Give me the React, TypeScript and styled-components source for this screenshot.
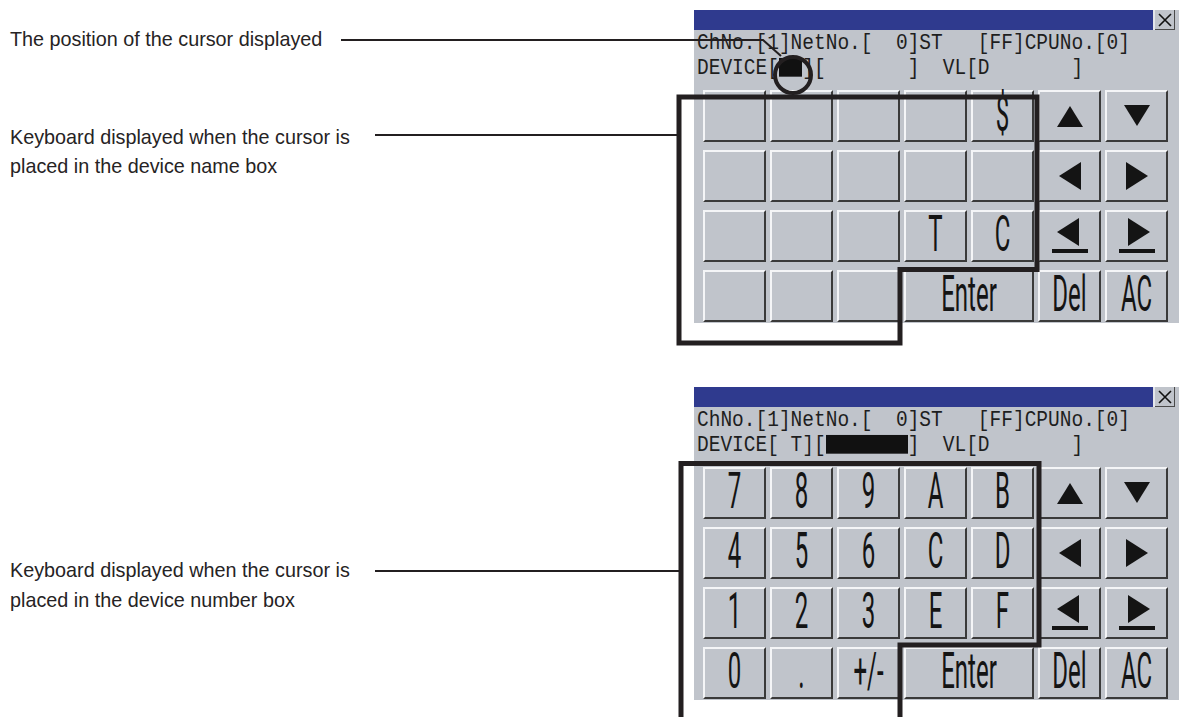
import React from "react";
import styled, { createGlobalStyle } from "styled-components";

const GlobalStyle = createGlobalStyle`
  html, body { margin: 0; padding: 0; background: #ffffff; }
  body { font-family: "Liberation Sans", Arial, sans-serif; }
`;

const Page = styled.div`
  position: relative;
  width: 1179px;
  height: 717px;
  overflow: hidden;
  background: #ffffff;
  box-sizing: border-box;
  padding-top: 10px;
  display: flex;
  flex-direction: column;
  gap: 64px;
`;

const Section = styled.section`
  display: grid;
  grid-template-columns: 694px 485px;
  align-items: start;
`;

const Labels = styled.div<{ $pad: number }>`
  padding-top: ${(p) => p.$pad}px;
  padding-left: 10px;
  display: flex;
  flex-direction: column;
`;

const Label = styled.p<{ $gap?: number }>`
  margin: ${(p) => p.$gap ?? 0}px 0 0 0;
  font-family: "Liberation Sans", Arial, sans-serif;
  font-size: 19.8px;
  line-height: 29.5px;
  color: #262324;
`;

const Panel = styled.div`
  background: #c0c4cb;
  display: flex;
  flex-direction: column;
  height: 313px;
`;

const TitleBar = styled.div`
  display: flex;
  height: 20px;
  align-items: stretch;
`;

const TitleFill = styled.div`
  flex: 1;
  background: #2f3a8e;
  border-right: 2px solid #e4e6ea;
`;

const CloseBox = styled.div`
  width: 19px;
  margin-right: 4px;
  background: #c0c4cb;
  border-right: 1px solid #4a4a4a;
  border-bottom: 1px solid #4a4a4a;
  display: flex;
  align-items: center;
  justify-content: center;
`;

const Info = styled.div`
  padding: 2px 0 8px 3px;
  font-family: "Liberation Mono", "DejaVu Sans Mono", monospace;
  font-size: 19.5px;
  color: #1e1e1e;
`;

const InfoLine = styled.div`
  height: 25px;
  line-height: 25px;
  white-space: pre;
  transform: scaleY(1.17);
  transform-origin: 50% 60%;
`;

const CursorBlock = styled.span<{ $cells: number }>`
  display: inline-block;
  width: ${(p) => p.$cells}ch;
  height: 16px;
  background: #111111;
  vertical-align: -2px;
`;

const Keypad = styled.div`
  display: grid;
  grid-template-columns: repeat(7, 63px);
  grid-auto-rows: 52px;
  column-gap: 4px;
  row-gap: 8px;
  padding-left: 9px;
`;

const Key = styled.div<{ $span?: number }>`
  grid-column: span ${(p) => p.$span ?? 1};
  box-sizing: border-box;
  background: #c0c4cb;
  border-style: solid;
  border-width: 2px;
  border-color: #f4f5f7 #3a3a3a #3a3a3a #f4f5f7;
  display: flex;
  align-items: center;
  justify-content: center;
`;

const KeyLabel = styled.span`
  display: inline-block;
  font-family: Roboto, "Liberation Sans", Arial, sans-serif;
  font-weight: 400;
  font-size: 24px;
  line-height: 20px;
  height: 20px;
  color: #141414;
  transform: scaleY(2.05);
  transform-origin: 50% 55%;
`;

const Overlay = styled.svg`
  position: absolute;
  left: 0;
  top: 0;
  pointer-events: none;
`;

type Arrow = "up" | "down" | "left" | "right" | "leftBar" | "rightBar";

const ArrowIcon: React.FC<{ kind: Arrow }> = ({ kind }) => {
  const fill = "#141414";
  if (kind === "up")
    return (
      <svg width="30" height="24" viewBox="0 0 30 24">
        <polygon points="15,2 28,23 2,23" fill={fill} />
      </svg>
    );
  if (kind === "down")
    return (
      <svg width="30" height="24" viewBox="0 0 30 24">
        <polygon points="2,1 28,1 15,22" fill={fill} />
      </svg>
    );
  if (kind === "left")
    return (
      <svg width="26" height="30" viewBox="0 0 26 30">
        <polygon points="24,1 24,29 2,15" fill={fill} />
      </svg>
    );
  if (kind === "right")
    return (
      <svg width="26" height="30" viewBox="0 0 26 30">
        <polygon points="2,1 2,29 24,15" fill={fill} />
      </svg>
    );
  if (kind === "leftBar")
    return (
      <svg width="38" height="38" viewBox="0 0 38 38">
        <polygon points="28,1 28,29 6,15" fill={fill} />
        <rect x="1" y="32" width="36" height="4" fill={fill} />
      </svg>
    );
  return (
    <svg width="38" height="38" viewBox="0 0 38 38">
      <polygon points="10,1 10,29 32,15" fill={fill} />
      <rect x="1" y="32" width="36" height="4" fill={fill} />
    </svg>
  );
};

type KeyDef = { label?: string; arrow?: Arrow; span?: number };

const arrowsRows: KeyDef[][] = [
  [{ arrow: "up" }, { arrow: "down" }],
  [{ arrow: "left" }, { arrow: "right" }],
  [{ arrow: "leftBar" }, { arrow: "rightBar" }],
];

const nameKeys: KeyDef[] = [
  {}, {}, {}, {}, { label: "$" }, ...arrowsRows[0],
  {}, {}, {}, {}, {}, ...arrowsRows[1],
  {}, {}, {}, { label: "T" }, { label: "C" }, ...arrowsRows[2],
  {}, {}, {}, { label: "Enter", span: 2 }, { label: "Del" }, { label: "AC" },
];

const numberKeys: KeyDef[] = [
  { label: "7" }, { label: "8" }, { label: "9" }, { label: "A" }, { label: "B" }, ...arrowsRows[0],
  { label: "4" }, { label: "5" }, { label: "6" }, { label: "C" }, { label: "D" }, ...arrowsRows[1],
  { label: "1" }, { label: "2" }, { label: "3" }, { label: "E" }, { label: "F" }, ...arrowsRows[2],
  { label: "0" }, { label: "." }, { label: "+/-" }, { label: "Enter", span: 2 }, { label: "Del" }, { label: "AC" },
];

const KeyboardPanel: React.FC<{ keys: KeyDef[]; deviceLine: React.ReactNode }> = ({ keys, deviceLine }) => (
  <Panel>
    <TitleBar>
      <TitleFill />
      <CloseBox>
        <svg width="14" height="14" viewBox="0 0 14 14">
          <path d="M1 1 L13 13 M13 1 L1 13" stroke="#111" strokeWidth="1.6" />
        </svg>
      </CloseBox>
    </TitleBar>
    <Info>
      <InfoLine>{"ChNo.[1]NetNo.[  0]ST   [FF]CPUNo.[0]"}</InfoLine>
      <InfoLine>{deviceLine}</InfoLine>
    </Info>
    <Keypad>
      {keys.map((k, i) => (
        <Key key={i} $span={k.span}>
          {k.arrow ? <ArrowIcon kind={k.arrow} /> : k.label ? <KeyLabel>{k.label}</KeyLabel> : null}
        </Key>
      ))}
    </Keypad>
  </Panel>
);

export default function App() {
  return (
    <>
      <GlobalStyle />
      <Page>
        <Section>
          <Labels $pad={15}>
            <Label>The position of the cursor displayed</Label>
            <Label $gap={68}>
              Keyboard displayed when the cursor is
              <br />
              placed in the device name box
            </Label>
          </Labels>
          <KeyboardPanel
            keys={nameKeys}
            deviceLine={
              <>
                {"DEVICE["}
                <CursorBlock $cells={2} />
                {"][       ]  VL[D       ]"}
              </>
            }
          />
        </Section>
        <Section>
          <Labels $pad={169}>
            <Label>
              Keyboard displayed when the cursor is
              <br />
              placed in the device number box
            </Label>
          </Labels>
          <KeyboardPanel
            keys={numberKeys}
            deviceLine={
              <>
                {"DEVICE[ T]["}
                <CursorBlock $cells={7} />
                {"]  VL[D       ]"}
              </>
            }
          />
        </Section>
        <Overlay width="1179" height="717" viewBox="0 0 1179 717">
          <g stroke="#231f20" fill="none">
            <polyline points="341,40 763,40 781,56" strokeWidth="2" />
            <circle cx="793" cy="75" r="18" strokeWidth="4" />
            <line x1="375" y1="135" x2="679" y2="135" strokeWidth="2" />
            <polygon points="679,97 1037,97 1037,269.5 900,269.5 900,343 679,343" strokeWidth="5" />
            <line x1="375" y1="571" x2="681" y2="571" strokeWidth="2" />
            <polyline points="681,722 681,463.5 1039,463.5 1039,645 900,645 900,722" strokeWidth="5" />
          </g>
        </Overlay>
      </Page>
    </>
  );
}
